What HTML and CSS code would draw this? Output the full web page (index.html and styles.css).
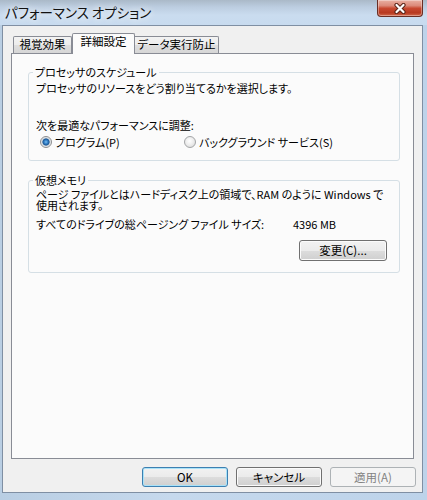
FILE: index.html
```html
<!DOCTYPE html>
<html lang="ja">
<head>
<meta charset="utf-8">
<title>パフォーマンス オプション</title>
<link rel="stylesheet" href="styles.css">
</head>
<body>
<div class="window">
  <div class="titlebar">
    <span class="title">パフォーマンス オプション</span>
    <div class="close">
      <svg width="14" height="11" viewBox="0 0 14 11">
        <path d="M3.5 2 L10.5 9 M10.5 2 L3.5 9" stroke="#5a2418" stroke-width="4.2" stroke-linecap="round" fill="none"/>
        <path d="M3.5 2 L10.5 9 M10.5 2 L3.5 9" stroke="#ffffff" stroke-width="2.2" stroke-linecap="round" fill="none"/>
      </svg>
    </div>
  </div>
  <div class="client">
    <div class="tabs">
      <div class="tab tab1">視覚効果</div>
      <div class="tab active">詳細設定</div>
      <div class="tab tab3">データ実行防止</div>
    </div>
    <div class="panel">
      <fieldset class="group g1">
        <legend>プロセッサのスケジュール</legend>
        <p class="desc">プロセッサのリソースをどう割り当てるかを選択します。</p>
        <p class="adjust">次を最適なパフォーマンスに調整:</p>
        <div class="radios">
          <label class="radio r1"><span class="dot checked"></span>プログラム(P)</label>
          <label class="radio"><span class="dot"></span>バックグラウンド サービス(S)</label>
        </div>
      </fieldset>
      <fieldset class="group g2">
        <legend>仮想メモリ</legend>
        <p class="desc2">ページ ファイルとはハードディスク上の領域で、RAM のように Windows で<br>使用されます。</p>
        <div class="size"><span>すべてのドライブの総ページング ファイル サイズ:</span><span>4396 MB</span></div>
        <div class="change-row"><button class="btn change">変更(C)...</button></div>
      </fieldset>
    </div>
    <div class="actions">
      <button class="btn default">OK</button>
      <button class="btn">キャンセル</button>
      <button class="btn disabled">適用(A)</button>
    </div>
  </div>
</div>
</body>
</html>
```
FILE: styles.css
```css
* { box-sizing: border-box; }
html, body { margin: 0; padding: 0; }
body {
  width: 427px;
  height: 500px;
  overflow: hidden;
  background: linear-gradient(90deg, #b9cee3 0%, #c6d9ed 40%, #bdd3ea 100%);
  font-family: "Noto Sans CJK JP", "Noto Sans", sans-serif;
  font-size: 11px;
  color: #000;
  font-feature-settings: "palt";
}
.window { width: 427px; height: 500px; }

.titlebar {
  height: 25px;
  display: flex;
  justify-content: space-between;
  align-items: flex-start;
  background: linear-gradient(#aab9c8 0px, #bccde0 7px, #cadcef 15px, #c8dbef 25px);
}
.title {
  font-size: 13.5px;
  line-height: 24px;
  padding-left: 5px;
  color: #111;
  text-shadow: 0 0 6px rgba(255,255,255,0.9), 0 0 10px rgba(255,255,255,0.7);
}
.close {
  width: 46px;
  height: 17px;
  margin-right: 4px;
  border: 1px solid #6a2e24;
  border-top: none;
  border-radius: 0 0 4px 4px;
  background: linear-gradient(#e9b0a2 0%, #dc8a79 35%, #c8482f 52%, #b7381f 80%, #d36a4c 100%);
  box-shadow: inset 0 0 0 1px rgba(255,255,255,0.35);
  display: flex;
  align-items: center;
  justify-content: center;
}

.client {
  margin: 0 4px 0 2px;
  height: 468px;
  border: 1px solid #7f8fa3;
  background: #f0f0f0;
  padding: 7px 8px 0;
  display: flex;
  flex-direction: column;
}

.tabs {
  display: flex;
  align-items: flex-end;
  height: 20px;
  padding-left: 2px;
  flex: none;
}
.tab {
  height: 17px;
  border: 1px solid #898c95;
  border-bottom: none;
  border-radius: 2px 2px 0 0;
  background: linear-gradient(#f3f3f3, #ececec 50%, #dfdfdf 50%, #d6d6d6);
  text-align: center;
  font-size: 11.5px;
  line-height: 15px;
  white-space: nowrap;
}
.tab1 { width: 59px; }
.tab3 { width: 84px; border-left: none; border-radius: 0 2px 0 0; }
.tab.active {
  width: 63px;
  height: 21px;
  margin-bottom: -1px;
  background: #fbfbfb;
  position: relative;
  z-index: 1;
}

.panel {
  height: 406px;
  flex: none;
  border: 1px solid #898c95;
  background: #fbfbfb;
  padding: 11px 13px 0 16px;
  display: flex;
  flex-direction: column;
  gap: 12px;
}

fieldset.group {
  margin: 0;
  min-width: 0;
  border: 1px solid #d5dfe5;
  border-radius: 3px;
  padding: 0 12px 11px 7px;
  flex: none;
}
fieldset.group legend {
  padding: 0 2px;
  margin-left: -3px;
  line-height: 14px;
}
.g2 legend { line-height: 12px; }

p { margin: 0; }
.desc { margin-top: 2px; line-height: 14px; }
.adjust { margin-top: 23px; line-height: 14px; }
.radios {
  display: flex;
  margin-top: 3px;
  height: 14px;
  line-height: 14px;
}
.radio { display: flex; align-items: center; gap: 3px; white-space: nowrap; }
.radio.r1 { width: 148px; padding-left: 4px; }
.dot {
  width: 12px;
  height: 12px;
  border-radius: 50%;
  border: 1px solid #a3a5a7;
  background: radial-gradient(circle at 45% 40%, #ffffff 0, #eeeeee 45%, #d6d6d6 100%);
  flex: none;
}
.dot.checked {
  border-color: #8b8d8f;
  background: radial-gradient(circle at 50% 50%, #7cc0f0 0, #3a86cc 1.6px, #1a5593 3.2px, #c9d3dc 3.9px, #eeeeee 5px, #dadada 100%);
}

.desc2 { margin-top: 2px; line-height: 11px; white-space: nowrap; }
.size {
  display: grid;
  grid-template-columns: 257px auto;
  margin-top: 6px;
  line-height: 14px;
  white-space: nowrap;
}
.change-row { display: flex; justify-content: flex-end; margin-top: 9px; }

.btn {
  width: 86px;
  height: 20px;
  padding: 0;
  font-family: inherit;
  font-size: 11.5px;
  font-feature-settings: "palt";
  color: #000;
  border: 1px solid #707070;
  border-radius: 3px;
  background: linear-gradient(#f2f2f2 0%, #ebebeb 50%, #dddddd 50%, #cfcfcf 100%);
  box-shadow: inset 0 0 0 1px #fbfbfb;
  line-height: 17px;
}
.btn.change { width: 88px; height: 21px; }
.btn.default {
  border-color: #3c7fb1;
  box-shadow: inset 0 0 0 1px #a9e2f8;
}
.btn.disabled {
  border-color: #adb2b5;
  background: #f4f4f4;
  box-shadow: none;
  color: #838383;
}

.actions {
  display: flex;
  justify-content: flex-end;
  gap: 8px;
  margin-top: 8px;
  margin-right: -2px;
  flex: none;
}
```
